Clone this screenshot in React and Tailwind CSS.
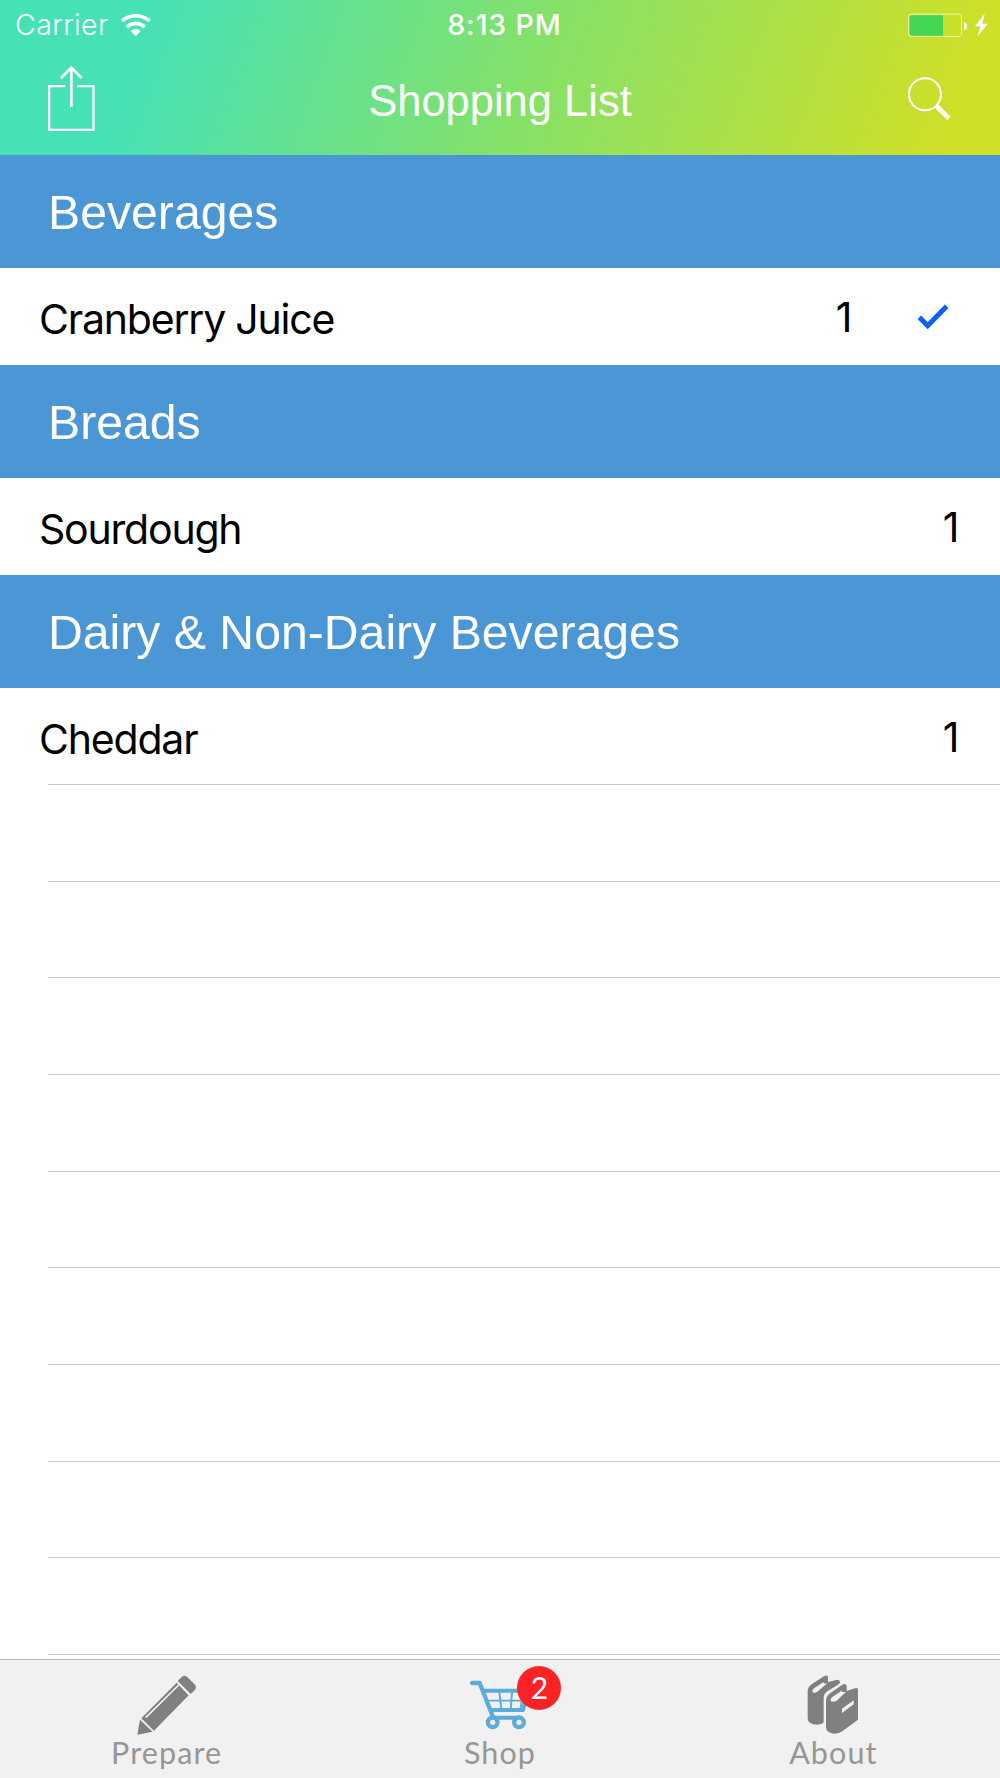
import clsx from 'clsx';

const sections = [
  { title: 'Beverages', items: [{ name: 'Cranberry Juice', qty: 1, checked: true }] },
  { title: 'Breads', items: [{ name: 'Sourdough', qty: 1 }] },
  { title: 'Dairy & Non-Dairy Beverages', items: [{ name: 'Cheddar', qty: 1 }] },
];

const EMPTY_ROWS = 9;

// --- Icons ---
function WifiIcon() {
  return (
    <svg viewBox="363 38 90 68" className="w-[30px] h-[22.7px]" fill="none" stroke="white">
      <path d="M366 58 Q407 28 449 58" strokeWidth="11" />
      <path d="M380 77 Q407 55 435 77" strokeWidth="11" />
      <path d="M392 89 Q407 75 422 89 L407 105 Z" fill="white" stroke="none" />
    </svg>
  );
}

function BatteryIcon() {
  return (
    <svg viewBox="144 36 246 72" className="w-[82px] h-[24px]">
      <rect x="145.5" y="39.5" width="159" height="67" rx="9" fill="none" stroke="#f0f5b4" strokeWidth="3" />
      <path d="M156 43 H249 V104 H156 Q149 104 149 97 V50 Q149 43 156 43 Z" fill="#44d653" />
      <path d="M312 63 Q321 66 321 75 Q321 84 312 87 Z" fill="white" />
      <path d="M374 38 L345 76 H361 L353 106 L384 68 H367 Z" fill="white" />
    </svg>
  );
}

function ShareIcon() {
  return (
    <svg viewBox="144 196 141 201" className="w-[47px] h-[67px]" fill="none" stroke="white" strokeWidth="7">
      <path d="M196 259.500 H147.500 V390.500 H280.500 V259.500 H231" />
      <path d="M214 322 V204" strokeWidth="8" />
      <path d="M183 235 L214 204 L245 235" strokeWidth="8" />
    </svg>
  );
}

function SearchIcon() {
  return (
    <svg viewBox="144 230 129 132" className="w-[43px] h-[44px]" fill="none" stroke="white">
      <circle cx="195" cy="282" r="48" strokeWidth="6" />
      <path d="M229 317 L267 354" strokeWidth="14" />
    </svg>
  );
}

function CheckIcon() {
  return (
    <svg viewBox="352 130 96 78" className="w-[32px] h-[26px]" fill="none" stroke="#0a60ff" strokeWidth="15">
      <path d="M359 170 L384 195 L441 137" />
    </svg>
  );
}

function PencilIcon() {
  return (
    <svg viewBox="135 100 186 192" className="w-[62px] h-[64px]" fill="#808080">
      <path d="M260 124 L273 111 Q280 105 288 111 L311 134 Q318 142 312 150 L299 163 Z" />
      <path d="M257 129 L293 167 L189 273 L151 236 Z" />
      <path d="M147 240 L185 276 L139 285 Z" />
      <path d="M164 234 L263 136" fill="none" stroke="#f1f1f1" strokeWidth="5" />
    </svg>
  );
}

function CartIcon() {
  return (
    <svg viewBox="85 100 186 192" className="w-[62px] h-[64px]" fill="none" stroke="#5dabdd" strokeLinecap="round" strokeLinejoin="round">
      <path d="M94 130 H117 L157 232" strokeWidth="13" />
      <path d="M130 153 H262 L247 211 H152" strokeWidth="12" />
      <path d="M140 183 H255" strokeWidth="5" />
      <path d="M176 156 L182 210 M214 156 L210 210 M248 156 L239 210" strokeWidth="6" />
      <path d="M156 234 H235" strokeWidth="12" />
      <circle cx="156" cy="248" r="14.500" strokeWidth="13" fill="#f1f1f1" />
      <circle cx="235" cy="248" r="14.500" strokeWidth="13" fill="#f1f1f1" />
    </svg>
  );
}

function BooksIcon() {
  return (
    <svg viewBox="126 100 186 192" className="w-[62px] h-[64px]" fill="#808080">
      <path
        fillRule="evenodd"
        d="M143 153 Q144 141 156 133 L193 109 Q202 105 204 112 V127 L229 121 Q238 119 240 127 Q240 132 234 135 L202 155 Q191 163 191 176 V246 Q191 252 184 253 Q169 257 157 253 Q143 248 143 236 Z
           M162 146 Q153 155 160 159 Q166 160 172 156 L202 131 L196 132 Q189 131 190 128 Z"
      />
      <path
        fillRule="evenodd"
        d="M198 182 Q199 169 210 161 L247 135 Q258 130 260 139 V154 L285 146 Q294 142 294 151 V240 L248 274 Q236 283 221 282 Q198 279 198 262 Z
           M216 173 Q208 182 215 186 Q222 187 229 184 L258 157 L252 158 Q244 157 245 153 Z
           M246 207 L281 182 V194 L246 220 Z"
      />
    </svg>
  );
}

const tabs = [
  { label: 'Prepare', icon: PencilIcon },
  { label: 'Shop', icon: CartIcon, badge: 2 },
  { label: 'About', icon: BooksIcon },
];

// --- Header ---
function Header() {
  return (
    <header className="h-[155px] shrink-0 text-white bg-[linear-gradient(110deg,#46e1b7_0%,#46e1b7_14.5%,#82e16c_51%,#d0df27_94.5%,#d0df27_100%)]">
      <div className="h-[50px] grid grid-cols-3 items-center font-['Inter',sans-serif]">
        <div className="flex items-center pl-[15px] gap-[12px]">
          <span className="text-[28.5px] font-light leading-none tracking-[0.4px] pt-[1px]">Carrier</span>
          <WifiIcon />
        </div>
        <span className="text-center text-[28.5px] font-medium leading-none pl-[9px] pt-[1px] tracking-[0.9px]">8:13 PM</span>
        <div className="flex justify-end pr-[10px]">
          <BatteryIcon />
        </div>
      </div>
      <div className="h-[105px] grid grid-cols-3 items-start">
        <div className="pl-[48px] pt-[15px]">
          <ShareIcon />
        </div>
        <h1 className="text-center text-[43.5px] leading-[50px] pt-[26px] whitespace-nowrap">Shopping List</h1>
        <div className="flex justify-end pr-[49px] pt-[26.67px]">
          <SearchIcon />
        </div>
      </div>
    </header>
  );
}

// --- List ---
function ItemRow({ item, last }) {
  return (
    <li className="h-[96.67px] flex">
      <div className={clsx('flex-1 flex items-center', last && 'relative')}>
        <span className="pl-[39px] pt-[6px] text-[41px] leading-none tracking-[-1.2px]">{item.name}</span>
        <span className={clsx('ml-auto pt-[2px] text-[41px] leading-none', item.checked ? 'pr-[64.5px]' : 'pr-[40.5px]')}>
          {item.qty}
        </span>
        {item.checked && (
          <div className="pr-[51px]">
            <CheckIcon />
          </div>
        )}
        {last && <div className="absolute bottom-0 left-12 right-0 h-px bg-[#c8c7cc]" />}
      </div>
    </li>
  );
}

function ShoppingList() {
  return (
    <main className="flex-1 min-h-0 overflow-hidden bg-white">
      {sections.map((section, i) => (
        <section key={section.title}>
          <h2 className="h-[113.33px] flex items-center pl-[48px] pt-[1px] bg-[#4b97d5] text-white text-[48.2px] leading-none">
            {section.title}
          </h2>
          <ul className="text-black font-['Inter',sans-serif]">
            {section.items.map((item) => (
              <ItemRow key={item.name} item={item} last={i === sections.length - 1} />
            ))}
          </ul>
        </section>
      ))}
      {Array.from({ length: EMPTY_ROWS }, (_, i) => (
        <div key={i} className="h-[96.67px] ml-12 border-b border-[#c8c7cc]" />
      ))}
    </main>
  );
}

// --- Tab bar ---
function TabBar() {
  return (
    <nav className="h-[119px] shrink-0 grid grid-cols-3 bg-[#f1f1f1] border-t border-[#b2b2b2] font-['Lato',sans-serif]">
      {tabs.map(({ label, icon: Icon, badge }) => (
        <button key={label} className="flex flex-col items-center pt-[13.33px] text-[#969696]">
          <span className="relative">
            <Icon />
            {badge && (
              <span className="absolute -top-[7px] left-[48.5px] w-[44px] h-[44px] rounded-full bg-[#fd2226] text-white text-[30px] leading-[43px] text-center">
                {badge}
              </span>
            )}
          </span>
          <span className="text-[30.5px] leading-[36px] -mt-[3px] tracking-[1.1px]">{label}</span>
        </button>
      ))}
    </nav>
  );
}

export default function App() {
  return (
    <div className="w-[1000px] h-[1778px] flex flex-col overflow-hidden bg-white font-['Liberation_Sans',Arial,sans-serif]">
      <Header />
      <ShoppingList />
      <TabBar />
    </div>
  );
}
